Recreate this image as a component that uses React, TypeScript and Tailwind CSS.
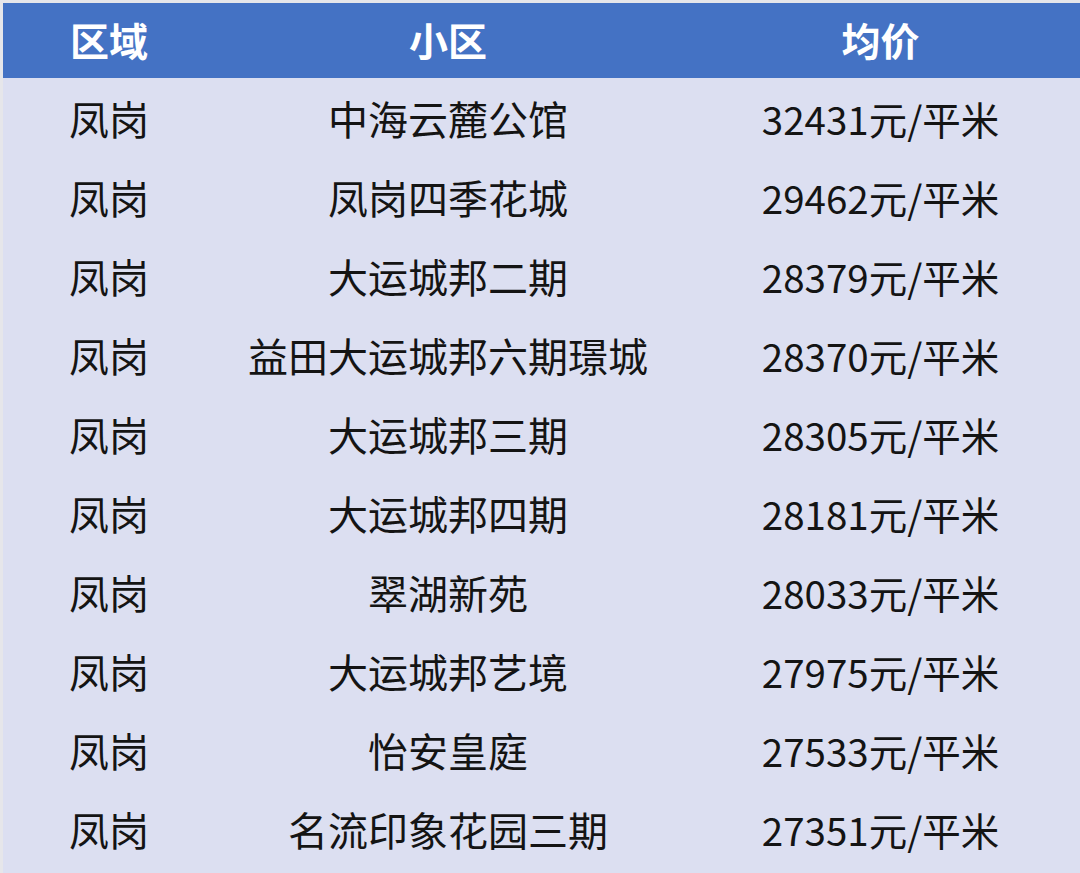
const ROWS = [
  { area: "凤岗", name: "中海云麓公馆", price: "32431" },
  { area: "凤岗", name: "凤岗四季花城", price: "29462" },
  { area: "凤岗", name: "大运城邦二期", price: "28379" },
  { area: "凤岗", name: "益田大运城邦六期璟城", price: "28370" },
  { area: "凤岗", name: "大运城邦三期", price: "28305" },
  { area: "凤岗", name: "大运城邦四期", price: "28181" },
  { area: "凤岗", name: "翠湖新苑", price: "28033" },
  { area: "凤岗", name: "大运城邦艺境", price: "27975" },
  { area: "凤岗", name: "怡安皇庭", price: "27533" },
  { area: "凤岗", name: "名流印象花园三期", price: "27351" },
]

const font = { fontFamily: '"Noto Sans CJK SC", "Noto Sans", sans-serif' }

export default function App() {
  return (
    <div className="w-[1080px] h-[873px] overflow-hidden bg-[#e6e6ea] pt-[3px] pl-[3px]" style={font}>
      <div className="bg-[#dcdff1] h-full">
        {/* header */}
        <div className="grid grid-cols-[212px_466px_1fr] h-[75px] items-center bg-[#4472c4] text-white font-bold text-[39px] leading-none">
          <div className="text-center pb-[2px]">区域</div>
          <div className="text-center pb-[2px]">小区</div>
          <div className="text-center pb-[2px]">均价</div>
        </div>

        {/* rows */}
        {ROWS.map((r, i) => (
          <div
            key={i}
            className="grid grid-cols-[212px_466px_1fr] h-[79px] items-center leading-none text-[#141414] pt-[1px]"
          >
            <div className="text-center text-[40px]">{r.area}</div>
            <div className="text-center text-[40px]">{r.name}</div>
            <div className="text-center text-[38.5px]">{r.price}元/平米</div>
          </div>
        ))}
      </div>
    </div>
  )
}
